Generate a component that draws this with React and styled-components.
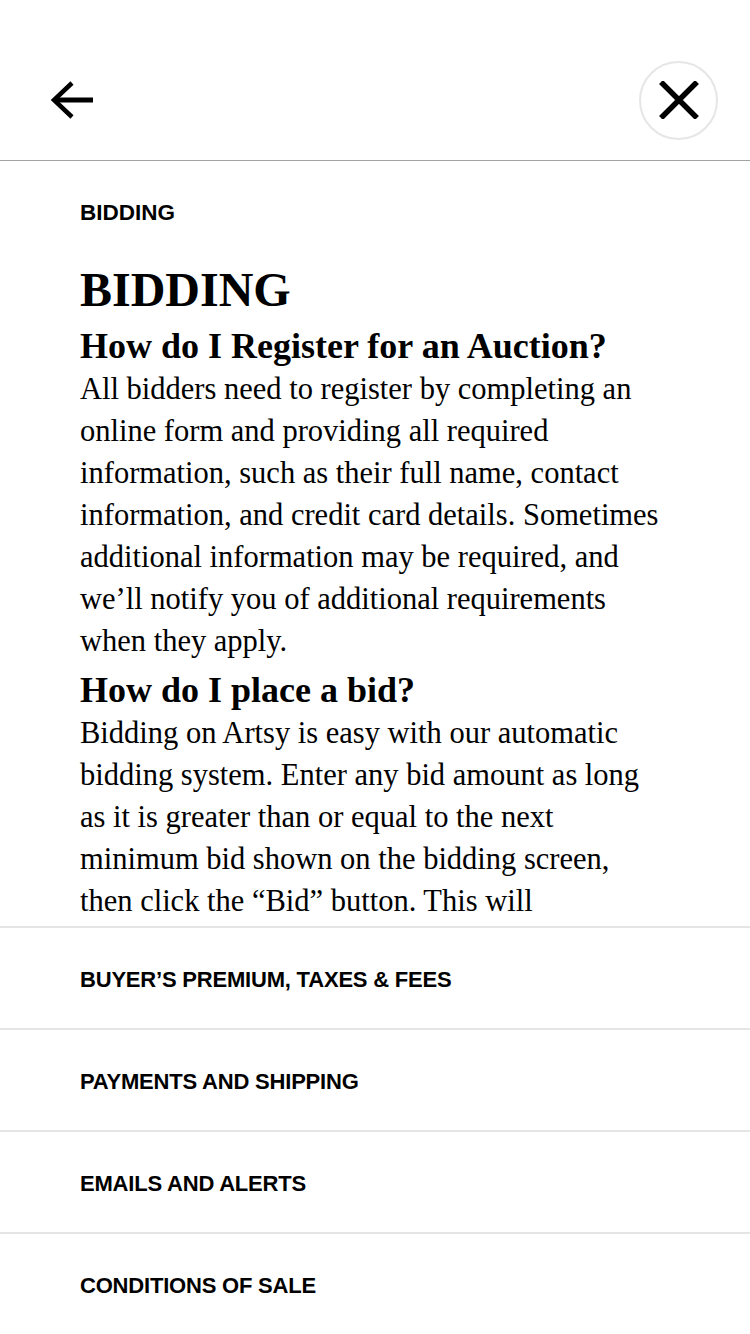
import React from "react";
import styled, { createGlobalStyle } from "styled-components";

const GlobalStyle = createGlobalStyle`
  html, body {
    margin: 0;
    padding: 0;
    background: #ffffff;
  }
`;

const Page = styled.div`
  width: 750px;
  height: 1334px;
  display: flex;
  flex-direction: column;
  overflow: hidden;
  background: #ffffff;
  color: #000000;
`;

const Header = styled.header`
  height: 161px;
  flex-shrink: 0;
  display: flex;
  align-items: center;
  justify-content: space-between;
  padding: 40px 32px 0 50px;
  box-sizing: border-box;
  border-bottom: 1px solid #a3a3a3;
`;

const IconButton = styled.button`
  border: none;
  background: transparent;
  padding: 0;
  display: flex;
  align-items: center;
  justify-content: center;
  cursor: pointer;
`;

const CloseButton = styled(IconButton)`
  width: 79px;
  height: 79px;
  border-radius: 50%;
  border: 2px solid #e6e6e6;
  box-sizing: border-box;
`;

const Scroller = styled.div`
  height: 765px;
  flex-shrink: 0;
  overflow: hidden;
  padding: 39px 80px 0 80px;
  box-sizing: border-box;
`;

const SectionLabel = styled.div`
  font-family: "Liberation Sans", Arial, sans-serif;
  font-weight: 700;
  font-size: 22.5px;
  letter-spacing: 0;
  line-height: 26px;
  text-transform: uppercase;
`;

const Title = styled.h1`
  margin: 37px 0 0 0;
  font-family: "Liberation Serif", "Times New Roman", serif;
  font-weight: 700;
  font-size: 48px;
  line-height: 54px;
`;

const Question = styled.h2`
  margin: ${(p) => (p.$first ? "9px" : "8px")} 0 2px 0;
  font-family: "Liberation Serif", "Times New Roman", serif;
  font-weight: 700;
  font-size: 36px;
  line-height: 40px;
`;

const Answer = styled.p`
  margin: 0;
  font-family: "Liberation Serif", "Times New Roman", serif;
  font-size: 30.5px;
  line-height: 42px;
  white-space: pre-line;
`;

const List = styled.ul`
  list-style: none;
  margin: 0;
  padding: 0;
`;

const Row = styled.li`
  height: 102px;
  box-sizing: border-box;
  border-top: 2px solid #e5e5e5;
  display: flex;
  align-items: center;
  padding: 3px 80px 0 80px;
  font-family: "Liberation Sans", Arial, sans-serif;
  font-weight: 700;
  font-size: 22px;
  letter-spacing: -0.2px;
  text-transform: uppercase;
`;

const BackArrow = () => (
  <svg width="44" height="38" viewBox="0 0 44 38" fill="none">
    <path d="M22 2 L4 19 L22 36" stroke="#000" strokeWidth="4.5" />
    <path d="M4 19 H43" stroke="#000" strokeWidth="5" />
  </svg>
);

const CloseIcon = () => (
  <svg width="40" height="38" viewBox="0 0 40 38" fill="none">
    <path d="M2 1 L38 37 M38 1 L2 37" stroke="#000" strokeWidth="5.5" />
  </svg>
);

// only the part of the answers that shows above the list
const faqs = [
  {
    q: "How do I Register for an Auction?",
    a: "All bidders need to register by completing an\nonline form and providing all required\ninformation, such as their full name, contact\ninformation, and credit card details. Sometimes\nadditional information may be required, and\nwe\u2019ll notify you of additional requirements\nwhen they apply.",
  },
  {
    q: "How do I place a bid?",
    a: "Bidding on Artsy is easy with our automatic\nbidding system. Enter any bid amount as long\nas it is greater than or equal to the next\nminimum bid shown on the bidding screen,\nthen click the \u201cBid\u201d button. This will",
  },
];

const sections = [
  "Buyer\u2019s Premium, Taxes & Fees",
  "Payments and Shipping",
  "Emails and Alerts",
  "Conditions of Sale",
];

export default function App() {
  return (
    <Page>
      <GlobalStyle />
      <Header>
        <IconButton aria-label="Back">
          <BackArrow />
        </IconButton>
        <CloseButton aria-label="Close">
          <CloseIcon />
        </CloseButton>
      </Header>
      <Scroller>
        <SectionLabel>Bidding</SectionLabel>
        <Title>BIDDING</Title>
        {faqs.map((item, index) => (
          <React.Fragment key={index}>
            <Question $first={index === 0}>{item.q}</Question>
            <Answer>{item.a}</Answer>
          </React.Fragment>
        ))}
      </Scroller>
      <List>
        {sections.map((label) => (
          <Row key={label}>{label}</Row>
        ))}
      </List>
    </Page>
  );
}
